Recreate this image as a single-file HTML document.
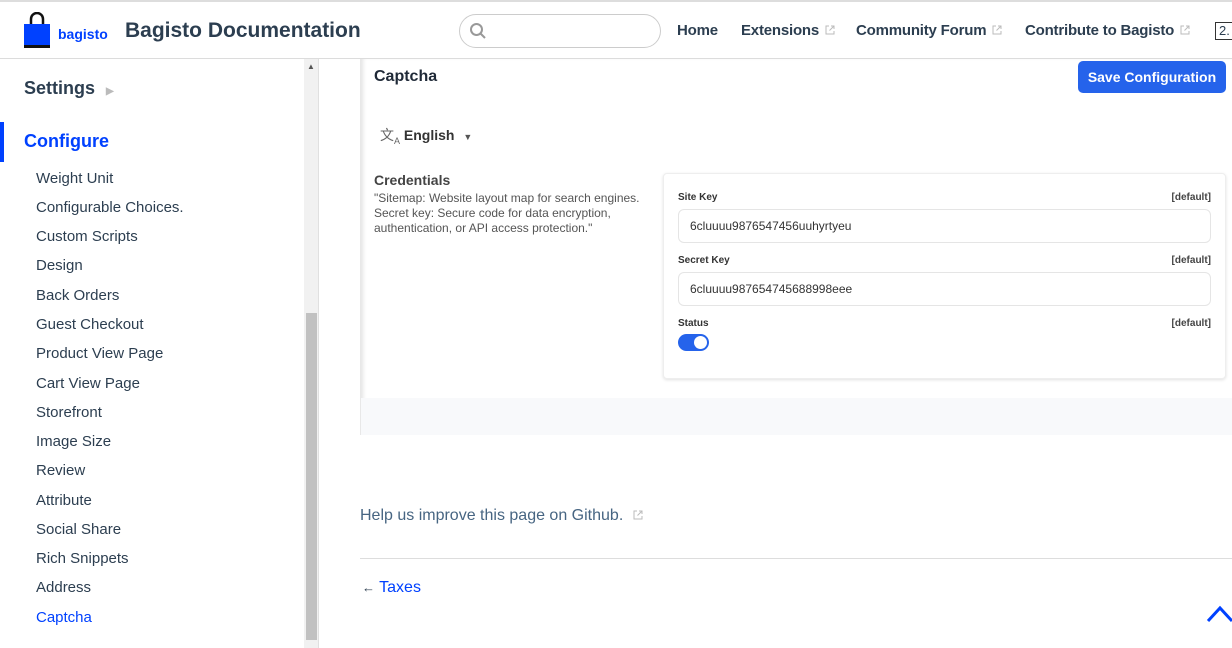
<!DOCTYPE html>
<html><head><meta charset="utf-8"><style>
*{box-sizing:border-box;margin:0;padding:0}
body{width:1232px;height:648px;overflow:hidden;background:#fff;font-family:"Liberation Sans",sans-serif;color:#2c3e50;position:relative}
.hdr{position:absolute;left:0;top:0;width:1232px;height:59px;border-top:2px solid #ddd;border-bottom:1px solid #dcdcdc;background:#fff}
.abs{position:absolute;white-space:nowrap}
.nav{font-size:15px;font-weight:bold;color:#2c3e50;top:20px;letter-spacing:-0.2px}
.ext{display:inline-block;width:10px;height:10px;margin-left:6px;vertical-align:0px}
.side a{position:absolute;left:36px;font-size:15px;color:#2c3e50;white-space:nowrap}
.dflt{position:absolute;right:14px;font-size:10px;font-weight:bold;color:#444}
.lbl{position:absolute;left:14px;font-size:10px;font-weight:bold;color:#333}
.inp{position:absolute;left:14px;right:14px;height:34px;border:1px solid #e5e5e5;border-radius:6px;font-size:12px;color:#333;padding:9px 11px}
</style></head><body>
<svg width="0" height="0" style="position:absolute"><defs><symbol id="ex" viewBox="0 0 10 10"><path d="M4 1H1v8h8V6" fill="none" stroke="#bbb" stroke-width="1"/><path d="M6 1h3v3M9 1L4.5 5.5" fill="none" stroke="#bbb" stroke-width="1"/></symbol></defs></svg>
<div class="hdr">
  <svg class="abs" style="left:24px;top:10px" width="26" height="36" viewBox="0 0 26 36"><path d="M7 14V7a6 6 0 0 1 12 0v7" fill="none" stroke="#111" stroke-width="2.5"/><rect x="0" y="12" width="26" height="21" fill="#0041ff"/><rect x="0" y="33" width="26" height="3" fill="#111"/></svg>
  <div class="abs" style="left:58px;top:24px;font-size:14px;font-weight:bold;color:#0041ff">bagisto</div>
  <div class="abs" style="left:125px;top:17px;font-size:21px;font-weight:bold;color:#2c3e50">Bagisto Documentation</div>
  <div class="abs" style="left:459px;top:12px;width:202px;height:34px;border:1px solid #ccc;border-radius:17px"></div>
  <svg class="abs" style="left:469px;top:20px" width="18" height="18" viewBox="0 0 18 18"><circle cx="7.5" cy="7.5" r="5.5" fill="none" stroke="#999" stroke-width="2"/><path d="M11.5 11.5L16 16" stroke="#999" stroke-width="2"/></svg>
  <div class="abs nav" style="left:677px">Home</div>
  <div class="abs nav" style="left:741px">Extensions<svg class="ext"><use href="#ex"/></svg></div>
  <div class="abs nav" style="left:856px">Community Forum<svg class="ext"><use href="#ex"/></svg></div>
  <div class="abs nav" style="left:1025px">Contribute to Bagisto<svg class="ext"><use href="#ex"/></svg></div>
  <div class="abs" style="left:1215px;top:20px;width:30px;height:18px;border:1px solid #333;font-size:13px;padding-left:3px">2.</div>
</div>
<div class="side">
  <div class="abs" style="left:24px;top:78px;font-size:18px;font-weight:bold">Settings <span style="color:#bbb;font-size:10px;margin-left:6px">▶</span></div>
  <div class="abs" style="left:0;top:122px;width:4px;height:40px;background:#0041ff"></div>
  <div class="abs" style="left:24px;top:131px;font-size:18px;font-weight:bold;color:#0041ff">Configure</div>
  <a style="top:170px">Weight Unit</a>
  <a style="top:199px">Configurable Choices.</a>
  <a style="top:228px">Custom Scripts</a>
  <a style="top:257px">Design</a>
  <a style="top:287px">Back Orders</a>
  <a style="top:316px">Guest Checkout</a>
  <a style="top:345px">Product View Page</a>
  <a style="top:375px">Cart View Page</a>
  <a style="top:404px">Storefront</a>
  <a style="top:433px">Image Size</a>
  <a style="top:462px">Review</a>
  <a style="top:492px">Attribute</a>
  <a style="top:521px">Social Share</a>
  <a style="top:550px">Rich Snippets</a>
  <a style="top:579px">Address</a>
  <a style="top:609px;color:#0041ff">Captcha</a>
</div>
<div class="abs" style="left:304px;top:59px;width:15px;height:589px;background:#f1f1f1;border-right:1px solid #e0e0e0"></div>
<div class="abs" style="left:306px;top:313px;width:11px;height:327px;background:#c1c1c1"></div>
<div class="abs" style="left:307px;top:62px;font-size:8px;color:#555">▲</div>
<!-- screenshot -->
<div class="abs" style="left:360px;top:59px;width:872px;height:376px;background:#fff;box-shadow:inset 4px 0 4px -2px #e3e3e3;border-left:1px solid #e8e8e8"></div>
<div class="abs" style="left:361px;top:398px;width:871px;height:37px;background:#f8f9fb"></div>
<div class="abs" style="left:374px;top:68px;font-size:16px;font-weight:bold;color:#1f2937">Captcha</div>
<div class="abs" style="left:1078px;top:61px;width:148px;height:32px;background:#2563eb;border-radius:5px;color:#fff;font-size:14px;font-weight:bold;text-align:center;line-height:32px">Save Configuration</div>
<div class="abs" style="left:380px;top:125px;font-size:14px;font-weight:bold;color:#333"><span style="color:#666;font-weight:normal">文<sub style="font-size:9px">A</sub></span> English <span style="font-size:9px;color:#555;margin-left:5px">▼</span></div>
<div class="abs" style="left:374px;top:172px;font-size:14px;font-weight:bold;color:#444">Credentials</div>
<div class="abs" style="left:374px;top:191px;font-size:12px;color:#555;line-height:15px">"Sitemap: Website layout map for search engines.<br>Secret key: Secure code for data encryption,<br>authentication, or API access protection."</div>
<div class="abs" style="left:663px;top:173px;width:563px;height:206px;background:#fff;border:1px solid #eee;border-radius:4px;box-shadow:0 1px 3px rgba(0,0,0,.12)">
  <div class="lbl" style="top:18px">Site Key</div><div class="dflt" style="top:18px">[default]</div>
  <div class="inp" style="top:35px">6cluuuu9876547456uuhyrtyeu</div>
  <div class="lbl" style="top:81px">Secret Key</div><div class="dflt" style="top:81px">[default]</div>
  <div class="inp" style="top:98px">6cluuuu987654745688998eee</div>
  <div class="lbl" style="top:144px">Status</div><div class="dflt" style="top:144px">[default]</div>
  <div style="position:absolute;left:14px;top:160px;width:31px;height:17px;border-radius:9px;background:#2563eb"><div style="position:absolute;right:2px;top:2px;width:13px;height:13px;border-radius:50%;background:#fff"></div></div>
</div>
<div class="abs" style="left:360px;top:507px;font-size:16px;color:#476582">Help us improve this page on Github.<svg class="ext" style="margin-left:10px"><use href="#ex"/></svg></div>
<div class="abs" style="left:360px;top:558px;width:872px;height:1px;background:#ddd"></div>
<div class="abs" style="left:362px;top:579px;font-size:16px;color:#0041ff"><span style="color:#2c3e50;font-size:13px">←</span> Taxes</div>
<svg class="abs" style="left:1206px;top:603px" width="28" height="20" viewBox="0 0 28 20"><path d="M2 18L14 5L26 18" fill="none" stroke="#0041ff" stroke-width="3"/></svg>
</body></html>
